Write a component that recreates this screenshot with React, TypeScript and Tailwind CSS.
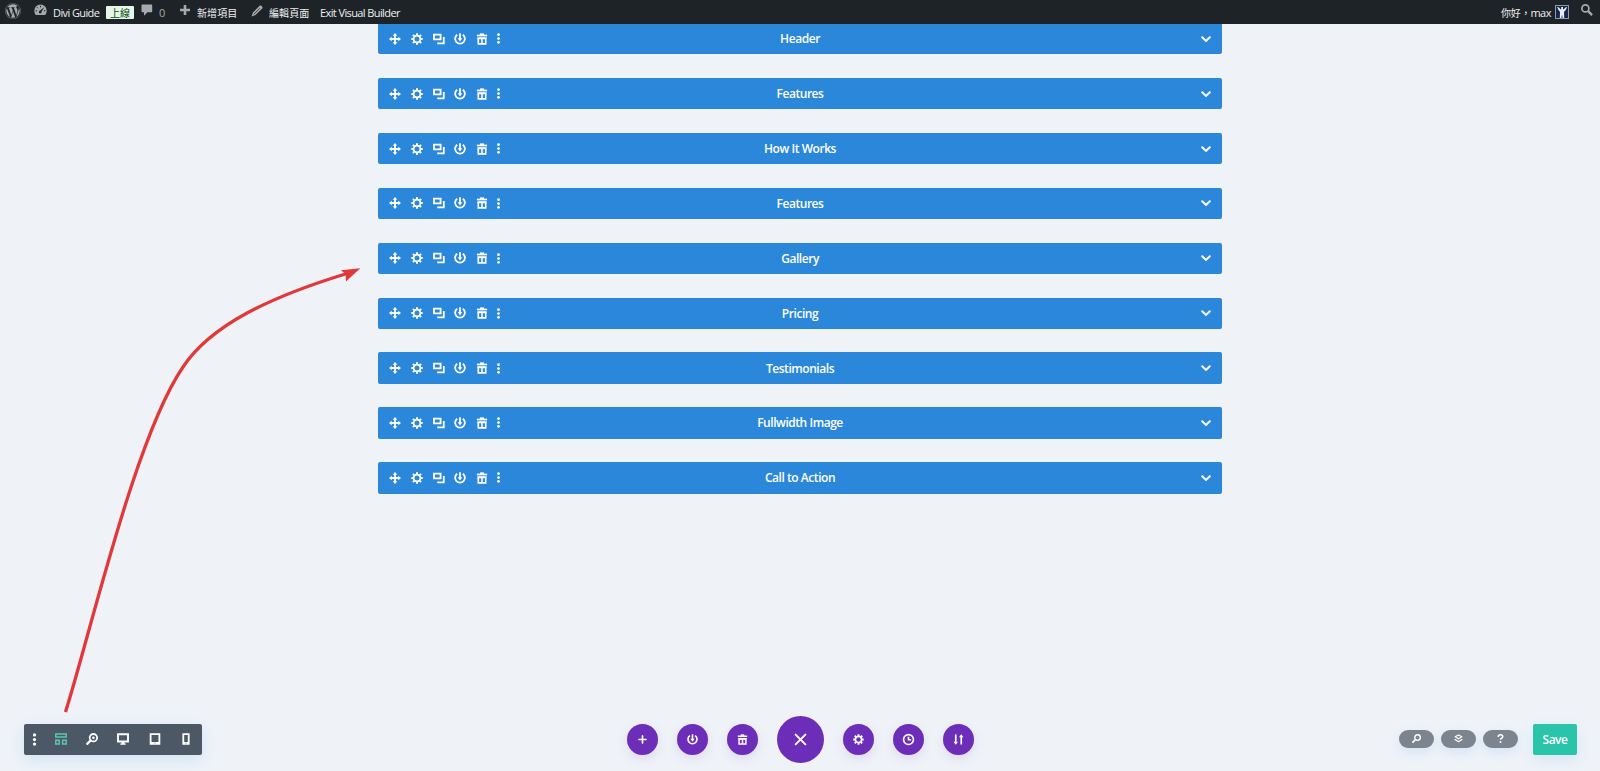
import React from "react";
import { FaWordpress } from "react-icons/fa";

interface IconProps {
  name: string;
  className?: string;
}

const sections = [
  "Header",
  "Features",
  "How It Works",
  "Features",
  "Gallery",
  "Pricing",
  "Testimonials",
  "Fullwidth Image",
  "Call to Action",
];

// all of the builder icons are drawn on a 12x12 grid
const icons: Record<string, React.ReactNode> = {
  move: (
    <>
      <path d="M6 1.5v9M1.5 6h9" stroke="currentColor" strokeWidth="1.8" />
      <path
        d="M6 0l2.3 2.8H3.7zM6 12l2.3-2.8H3.7zM0 6l2.8-2.3v4.6zM12 6L9.2 3.7v4.6z"
        fill="currentColor"
      />
    </>
  ),
  gear: (
    <>
      <circle cx="6" cy="6" r="3.4" stroke="currentColor" strokeWidth="1.8" />
      <path
        d="M6 .3v2M6 9.7v2M.3 6h2M9.7 6h2M1.9 1.9l1.5 1.5M8.6 8.6l1.5 1.5M1.9 10.1l1.5-1.5M8.6 3.4l1.5-1.5"
        stroke="currentColor"
        strokeWidth="2"
      />
    </>
  ),
  copy: (
    <>
      <path d="M1 1.6h6.6v4.8H1z" stroke="currentColor" strokeWidth="1.8" />
      <path d="M10.8 4v6.3H4.2" stroke="currentColor" strokeWidth="1.8" />
    </>
  ),
  power: (
    <>
      <path
        d="M3.2 1.7a4.9 4.9 0 1 0 5.6 0"
        stroke="currentColor"
        strokeWidth="1.8"
      />
      <path d="M6 .3v6" stroke="currentColor" strokeWidth="1.8" />
      <path d="M3.7 5.2h4.6L6 8.4z" fill="currentColor" />
    </>
  ),
  trash: (
    <>
      <path d="M.9 2.5h10.2" stroke="currentColor" strokeWidth="1.7" />
      <path d="M4 .4h4v1.7H4z" fill="currentColor" />
      <path
        d="M2.3 5.2h7.4v5.7H2.3zM6 5v6"
        stroke="currentColor"
        strokeWidth="1.6"
      />
      <path d="M1.5 4.4h9v1.8h-9z" fill="currentColor" />
    </>
  ),
  dots: (
    <>
      <circle cx="6" cy="1.8" r="1.5" fill="currentColor" />
      <circle cx="6" cy="6" r="1.5" fill="currentColor" />
      <circle cx="6" cy="10.2" r="1.5" fill="currentColor" />
    </>
  ),
  chevron: (
    <path
      d="M2.2 4.2L6 7.9l3.8-3.7"
      stroke="currentColor"
      strokeWidth="2"
      strokeLinecap="round"
    />
  ),
  wireframe: (
    <path
      d="M.8 1h10.4v3H.8zM.8 7.2h3.4v3.7H.8zM7.6 7.2h3.6v3.7H7.6z"
      stroke="currentColor"
      strokeWidth="1.5"
    />
  ),
  zoom: (
    <>
      <circle cx="7.4" cy="4.7" r="3.7" stroke="currentColor" strokeWidth="1.8" />
      <path
        d="M4.6 7.5L1.2 10.8"
        stroke="currentColor"
        strokeWidth="2.3"
        strokeLinecap="round"
      />
    </>
  ),
  zoomDot: <circle cx="7.4" cy="4.7" r="1.3" fill="currentColor" />,
  desktop: (
    <>
      <path d="M1 1.3h10v7.2H1z" stroke="currentColor" strokeWidth="1.9" />
      <path d="M4.6 9h2.8v1.4h1.3v1.4H3.3v-1.4h1.3z" fill="currentColor" />
    </>
  ),
  tablet: (
    <>
      <path d="M1.6 1.1h8.8v9.8H1.6z" stroke="currentColor" strokeWidth="1.8" />
      <path d="M2 9h8v2H2z" fill="currentColor" />
      <path d="M5.5 10.1h1" stroke="#4c5866" strokeWidth=".8" />
    </>
  ),
  phone: (
    <>
      <path d="M3.3 1.1h5.4v9.8H3.3z" stroke="currentColor" strokeWidth="1.8" />
      <path d="M4 9h4v2H4z" fill="currentColor" />
      <path d="M5.5 10.1h1" stroke="#4c5866" strokeWidth=".8" />
    </>
  ),
  plus: (
    <path
      d="M6 2.1v7.8M2.1 6h7.8"
      stroke="currentColor"
      strokeWidth="1.8"
      strokeLinecap="round"
    />
  ),
  close: (
    <path
      d="M1.5 1.5l9 9M10.5 1.5l-9 9"
      stroke="currentColor"
      strokeWidth="1.8"
      strokeLinecap="round"
    />
  ),
  clock: (
    <>
      <circle cx="6" cy="6" r="5.4" stroke="currentColor" strokeWidth="1.8" />
      <path d="M6 3v3.3h2.9" stroke="currentColor" strokeWidth="1.8" />
    </>
  ),
  sort: (
    <>
      <path d="M3 .5v9M9 2.5v9" stroke="currentColor" strokeWidth="1.8" />
      <path d="M.6 8.4h4.8L3 11.8zM6.6 3.6h4.8L9 .2z" fill="currentColor" />
    </>
  ),
  layers: (
    <>
      <path
        d="M6 1.2l4.4 2.6L6 6.4 1.6 3.8z"
        stroke="currentColor"
        strokeWidth="1.6"
        strokeLinejoin="round"
      />
      <path
        d="M1.4 7.4L6 10.3l4.6-2.9"
        stroke="currentColor"
        strokeWidth="1.7"
        strokeLinecap="round"
      />
    </>
  ),
  help: (
    <>
      <path
        d="M3 3.9C3 2.2 4.3 1.1 6 1.1s3 .9 3 2.5C9 5.5 6 5.5 6 7.8"
        stroke="currentColor"
        strokeWidth="2"
      />
      <circle cx="6" cy="10.6" r="1.3" fill="currentColor" />
    </>
  ),
};

const Icon: React.FC<IconProps> = ({ name, className = "size-3" }) => (
  <svg
    viewBox="0 0 12 12"
    fill="none"
    className={`shrink-0 overflow-visible ${className}`}
  >
    {icons[name]}
    {name === "zoomDetail" && (
      <>
        {icons.zoom}
        {icons.zoomDot}
      </>
    )}
  </svg>
);

const AdminBar = () => (
  <header className="z-10 flex h-6 shrink-0 items-center bg-[#1d2327] pt-px pr-[7px] pl-[5px] text-[11px] leading-none tracking-[-0.6px] whitespace-nowrap text-[#f0f0f1]">
    <FaWordpress className="-mt-[3px] size-4 text-[#a7aaad]" />
    <svg
      viewBox="0 0 13 12"
      className="-mt-[5px] ml-[13px] h-3 w-[13px] shrink-0 text-[#a7aaad]"
    >
      <path
        d="M6.5.5A6.2 6.2 0 0 0 .3 6.7c0 1.7.6 3.2 1.6 4.3h9.2c1-1.1 1.6-2.6 1.6-4.3A6.2 6.2 0 0 0 6.5.5z"
        fill="currentColor"
      />
      <path
        d="M6.5 1.8v1.5M2.9 3.2l1 1M1.6 6.8h1.5M11.4 6.8H9.9"
        stroke="#1d2327"
        strokeWidth="1"
      />
      <path d="M10.4 3L7.6 7.6a1.4 1.4 0 1 1-1.5-1z" fill="#1d2327" />
    </svg>
    <span className="ml-[6px] w-[46px]">Divi Guide</span>
    <span className="ml-[7px] flex h-[13px] w-7 items-center justify-center rounded-[1px] bg-[#e6f6e9] text-[10px] tracking-normal text-[#00450c]">
      上線
    </span>
    <svg
      viewBox="0 0 12 12"
      className="-mt-[5px] ml-[7px] size-3 text-[#a7aaad]"
      fill="currentColor"
    >
      <path d="M1.5.5h8.7c.6 0 1 .4 1 1v5.7c0 .6-.4 1-1 1H6.4L3 11.8V8.2H1.5c-.6 0-1-.4-1-1V1.5c0-.6.4-1 1-1z" />
    </svg>
    <span className="ml-[6px] w-[7px] text-[#a7aaad]">0</span>
    <svg viewBox="0 0 12 12" className="-mt-[5px] ml-[13px] size-3">
      <path d="M6 1v10M1 6h10" stroke="#a7aaad" strokeWidth="2.6" />
    </svg>
    <span className="ml-[6px] w-[42px] text-[10px] tracking-[0.1px]">
      新增項目
    </span>
    <svg
      viewBox="0 0 12 12"
      className="-mt-[4px] ml-[12px] size-3"
      fill="#a7aaad"
    >
      <path d="M8.6.8c.5-.5 1.1-.5 1.6 0l1 1c.5.5.5 1.1 0 1.6L4.5 10.1.6 11.5l1.3-4z" />
      <path d="M2.8 9.3l6-6" stroke="#1d2327" strokeWidth=".8" />
    </svg>
    <span className="ml-[6px] w-[42px] text-[10px] tracking-[0.1px]">
      編輯頁面
    </span>
    <span className="ml-[9px]">Exit Visual Builder</span>
    <span className="ml-auto tracking-[-0.5px]">
      <span className="text-[10px] tracking-[-0.2px]">你好，</span>max
    </span>
    <svg viewBox="0 0 14 14" className="-mt-px ml-1 size-3.5 shrink-0">
      <path d="M0 0h14v14H0z" fill="#8c9bb0" />
      <path d="M1 1h12v12H1z" fill="#16264d" />
      <path
        d="M2 2l2 .6 1.4 1.6h.8V2H8v2.2h.8l1.6-1.6 1.8-.6-1.8 3.6L9 6.8 9.2 13H7.6L7 9.5 6.4 13H4.8L5 6.8 3.8 5.6z"
        fill="#e9edf3"
      />
    </svg>
    <svg
      viewBox="0 0 12 12"
      className="-mt-[5px] ml-[12px] size-3 shrink-0"
      fill="none"
      stroke="#a7aaad"
    >
      <circle cx="4.4" cy="4.4" r="3.5" strokeWidth="1.7" />
      <path d="M6.9 6.9l4.2 4.2" strokeWidth="2.3" />
    </svg>
  </header>
);

const SectionBar = ({ title }: { title: string }) => (
  <div className="grid h-[31.3px] w-[844px] shrink-0 grid-cols-[1fr_auto_1fr] items-center rounded-[2px] bg-[#2b87da] text-white">
    <div className="flex items-center gap-[9.8px] pl-[11px]">
      <Icon name="move" />
      <Icon name="gear" />
      <Icon name="copy" />
      <Icon name="power" />
      <Icon name="trash" />
      <Icon name="dots" className="-ml-[5px] size-[11px]" />
    </div>
    <span className="pt-px text-[12px] leading-none font-semibold tracking-[-0.45px]">
      {title}
    </span>
    <Icon name="chevron" className="mr-[10px] size-3 justify-self-end" />
  </div>
);

const RoundButton = ({ name }: { name: string }) => (
  <button
    type="button"
    className="flex size-[31px] items-center justify-center rounded-full bg-[#6c2eb9] text-white shadow-[0_4px_12px_rgba(108,46,185,0.12)]"
  >
    <Icon name={name} className="size-[11px]" />
  </button>
);

const PillButton = ({ name }: { name: string }) => (
  <button
    type="button"
    className="flex h-[18px] w-[35px] items-center justify-center rounded-full bg-[#7c858f] text-white shadow-[0_4px_12px_rgba(43,135,218,0.14)]"
  >
    <Icon name={name} className="-mt-px size-[9px]" />
  </button>
);

const BottomBar = () => (
  <footer className="mb-4 grid h-8 shrink-0 grid-cols-[1fr_auto_1fr] items-center pr-[23px] pl-6">
    <div className="flex h-[31px] w-[178px] items-center rounded-[2px] bg-[#4c5866] pl-[4px] text-white shadow-[0_5px_15px_rgba(43,135,218,0.14)]">
      <Icon name="dots" className="size-[13px]" />
      <Icon name="wireframe" className="ml-[14px] size-3 text-[#5ac8ad]" />
      <div className="ml-[19px] flex gap-[19.3px]">
        <Icon name="zoomDetail" />
        <Icon name="desktop" />
        <Icon name="tablet" />
        <Icon name="phone" />
      </div>
    </div>
    <div className="flex items-center gap-[19px]">
      <RoundButton name="plus" />
      <RoundButton name="power" />
      <RoundButton name="trash" />
      <button
        type="button"
        className="-my-2 flex size-[47px] items-center justify-center rounded-full bg-[#6c2eb9] text-white"
      >
        <Icon name="close" className="size-[13px]" />
      </button>
      <RoundButton name="gear" />
      <RoundButton name="clock" />
      <RoundButton name="sort" />
    </div>
    <div className="flex items-center justify-end gap-[7px]">
      <PillButton name="zoom" />
      <PillButton name="layers" />
      <PillButton name="help" />
      <button
        type="button"
        className="ml-2 h-[31px] w-11 rounded-[2px] bg-[#29c4a9] pt-px text-[12px] font-semibold tracking-[-0.5px] text-white shadow-[0_5px_15px_rgba(43,135,218,0.12)]"
      >
        Save
      </button>
    </div>
  </footer>
);

const App: React.FC = () => {
  return (
    <div className="relative flex h-[771px] w-[1600px] flex-col overflow-hidden bg-[#eff3f8] font-['Open_Sans','Noto_Sans_CJK_TC',sans-serif]">
      <AdminBar />
      <main className="flex min-h-0 flex-1 flex-col overflow-hidden">
        <div className="-mt-[0.9px] flex flex-col items-center gap-[23.6px]">
          {sections.map((title, index) => (
            <SectionBar key={index} title={title} />
          ))}
        </div>
      </main>
      <BottomBar />
      {/* arrow from the wireframe button up to the sections */}
      <svg
        viewBox="0 0 1600 771"
        className="pointer-events-none absolute inset-0 size-full"
      >
        <path
          d="M65.5 712C90 635 135 437 183 367C211 325 270 297 347 273.5"
          fill="none"
          stroke="#e0393a"
          strokeWidth="3.3"
        />
        <path
          d="M360.3 268.3L341 270.3L345.5 274L346 281.5z"
          fill="#e0393a"
        />
      </svg>
    </div>
  );
};

export default App;
